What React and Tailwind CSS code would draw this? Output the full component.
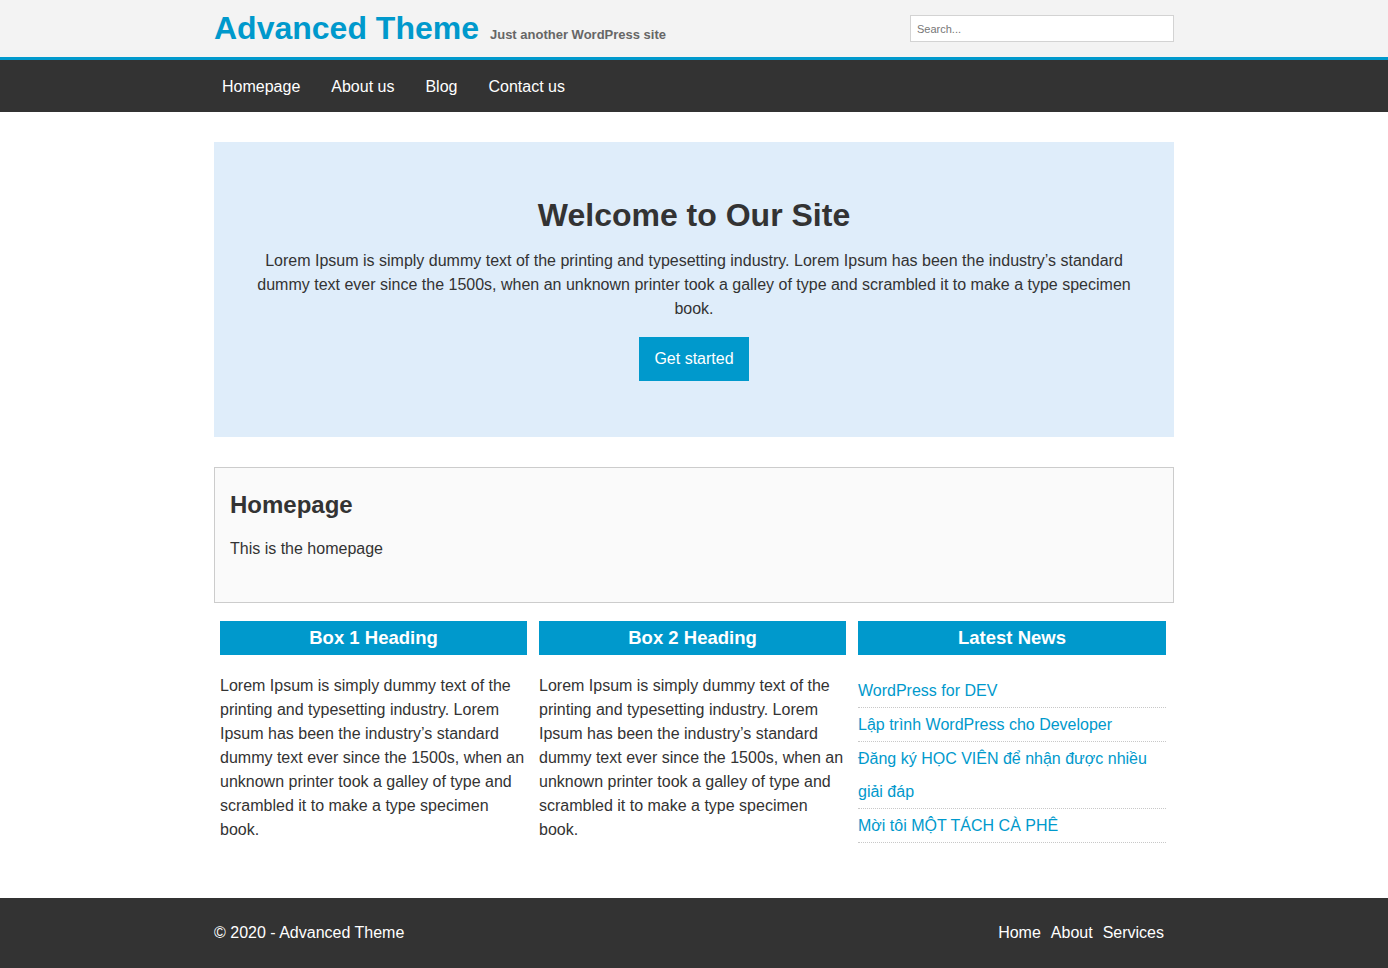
import React from "react";

const lorem =
  "Lorem Ipsum is simply dummy text of the printing and typesetting industry. Lorem Ipsum has been the industry’s standard dummy text ever since the 1500s, when an unknown printer took a galley of type and scrambled it to make a type specimen book.";

const news = [
  "WordPress for DEV",
  "Lập trình WordPress cho Developer",
  "Đăng ký HỌC VIÊN để nhận được nhiều giải đáp",
  "Mời tôi MỘT TÁCH CÀ PHÊ",
];

export default function App() {
  return (
    <div className="min-h-[968px] bg-white text-[#333] font-['Liberation_Sans',Arial,sans-serif] flex flex-col">
      <header className="bg-[#f3f3f3] border-b-[3px] border-[#0099cc]">
        <div className="w-[960px] mx-auto h-[57px] flex items-start justify-between">
          <div className="flex items-baseline pt-[8px]">
            <span className="text-[32px] leading-[40px] font-bold text-[#0099cc]">Advanced Theme</span>
            <span className="ml-[11px] text-[13px] font-bold text-[#666]">Just another WordPress site</span>
          </div>
          <input
            type="text"
            placeholder="Search..."
            className="mt-[15px] w-[264px] h-[27px] border border-[#d3d3d3] bg-white px-[6px] text-[11px] text-[#333] placeholder:text-[#777] outline-none"
          />
        </div>
      </header>
      <nav className="bg-[#333] h-[52px]">
        <ul className="w-[960px] mx-auto h-full flex items-center gap-[31px] pl-[8px] pt-[2px] text-white text-[16px]">
          <li>Homepage</li>
          <li>About us</li>
          <li>Blog</li>
          <li>Contact us</li>
        </ul>
      </nav>
      <main className="w-[960px] mx-auto flex-1 pt-[30px] pb-[55px]">
        <section className="bg-[#dfedfa] h-[295px] px-[40px] pt-[54px] flex flex-col items-center text-center">
          <h1 className="text-[32px] leading-[38px] font-bold text-[#333]">Welcome to Our Site</h1>
          <p className="mt-[15px] text-[16px] leading-[24px] text-[#333]">{lorem}</p>
          <button className="mt-[16px] w-[110px] h-[44px] bg-[#0099cc] text-white text-[16px]">Get started</button>
        </section>
        <section className="mt-[30px] border border-[#ccc] bg-[#fafafa] h-[136px] px-[15px] pt-[22px]">
          <h2 className="text-[24px] leading-[29px] font-bold text-[#333]">Homepage</h2>
          <p className="mt-[18px] text-[16px] leading-[24px]">This is the homepage</p>
        </section>
        <div className="mt-[18px] grid grid-cols-[307px_307px_308px] gap-[12px] pl-[6px]">
          <div>
            <h3 className="bg-[#0099cc] h-[34px] flex items-center justify-center text-white text-[18.5px] font-bold">Box 1 Heading</h3>
            <p className="mt-[19px] text-[16px] leading-[24px]">{lorem}</p>
          </div>
          <div>
            <h3 className="bg-[#0099cc] h-[34px] flex items-center justify-center text-white text-[18.5px] font-bold">Box 2 Heading</h3>
            <p className="mt-[19px] text-[16px] leading-[24px]">{lorem}</p>
          </div>
          <div>
            <h3 className="bg-[#0099cc] h-[34px] flex items-center justify-center text-white text-[18.5px] font-bold">Latest News</h3>
            <ul className="mt-[19px]">
              {news.map((n) => (
                <li key={n} className="border-b border-dotted border-[#c8c8c8] text-[16px] leading-[33px] text-[#0099cc]">
                  {n}
                </li>
              ))}
            </ul>
          </div>
        </div>
      </main>
      <footer className="bg-[#333] h-[70px]">
        <div className="w-[960px] mx-auto h-full flex items-center justify-between pr-[10px] text-white text-[16px]">
          <span>© 2020 - Advanced Theme</span>
          <div className="flex gap-[10px]">
            <span>Home</span>
            <span>About</span>
            <span>Services</span>
          </div>
        </div>
      </footer>
    </div>
  );
}
